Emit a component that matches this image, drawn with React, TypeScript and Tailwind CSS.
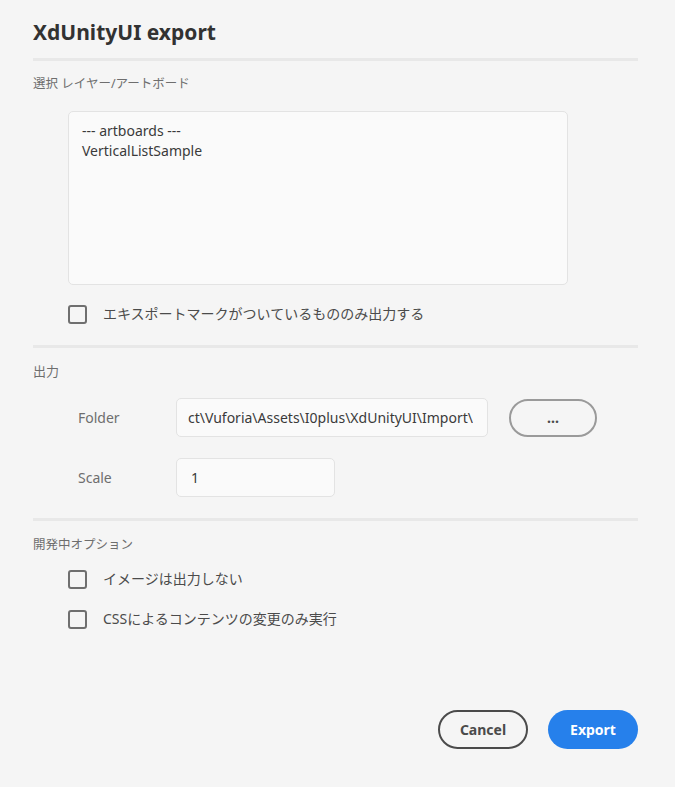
export default function App() {
  const font = { fontFamily: '"Noto Sans", "Noto Sans CJK JP", sans-serif' };
  const Checkbox = ({ label }: { label: string }) => (
    <div className="flex items-center h-[20px]">
      <div className="w-[19px] h-[19px] border-2 border-[#6f6f6f] rounded-[3px] box-border shrink-0" />
      <span className="ml-[16px] text-[14px] text-[#4b4b4b] leading-[20px]">{label}</span>
    </div>
  );
  return (
    <div
      className="w-[675px] h-[787px] bg-[#f5f5f5] pl-[33px] pr-[37px] pt-[17px] pb-[38px] flex flex-col box-border"
      style={font}
    >
      <h1 className="text-[21px] font-bold leading-[30px] text-[#323232] m-0">XdUnityUI export</h1>
      <div className="mt-[11px] h-[3px] bg-[#e8e8e8]" />
      <div className="mt-[13px] text-[12.5px] leading-[20px] text-[#6e6e6e]">選択 レイヤー/アートボード</div>
      <div className="mt-[17px] ml-[35px] w-[500px] h-[174px] bg-[#fafafa] border border-[#e3e3e3] rounded-[5px] box-border px-[13px] py-[9px] text-[14px] leading-[20px] text-[#3a3a3a]">
        <div>--- artboards ---</div>
        <div>VerticalListSample</div>
      </div>
      <div className="mt-[19px] ml-[35px]">
        <Checkbox label="エキスポートマークがついているもののみ出力する" />
      </div>
      <div className="mt-[21px] h-[3px] bg-[#e8e8e8]" />
      <div className="mt-[13px] text-[13px] leading-[20px] text-[#6e6e6e]">出力</div>
      <div className="mt-[17px] flex items-center">
        <div className="ml-[45px] w-[98px] shrink-0 text-[14px] text-[#6e6e6e]">Folder</div>
        <div className="w-[312px] h-[39px] shrink-0 bg-[#fafafa] border border-[#e3e3e3] rounded-[5px] box-border pr-[14px] overflow-hidden">
          <div className="h-full pl-[4px] flex items-center justify-end whitespace-nowrap overflow-hidden text-[14px] text-[#3a3a3a]">
            <span className="shrink-0">ct\Vuforia\Assets\I0plus\XdUnityUI\Import\</span>
          </div>
        </div>
        <button className="ml-[21px] w-[88px] h-[38px] shrink-0 rounded-full border-2 border-[#9a9a9a] box-border text-[14px] font-bold text-[#4b4b4b] flex items-center justify-center leading-none">
          ...
        </button>
      </div>
      <div className="mt-[21px] flex items-center">
        <div className="ml-[45px] w-[98px] shrink-0 text-[14px] text-[#6e6e6e]">Scale</div>
        <div className="w-[159px] h-[39px] bg-[#fafafa] border border-[#e3e3e3] rounded-[5px] box-border px-[14px] flex items-center text-[14px] text-[#3a3a3a]">
          1
        </div>
      </div>
      <div className="mt-[21px] h-[3px] bg-[#e8e8e8]" />
      <div className="mt-[14px] text-[12.5px] leading-[20px] text-[#6e6e6e]">開発中オプション</div>
      <div className="mt-[14px] ml-[35px]">
        <Checkbox label="イメージは出力しない" />
      </div>
      <div className="mt-[20px] ml-[35px]">
        <Checkbox label="CSSによるコンテンツの変更のみ実行" />
      </div>
      <div className="mt-auto flex justify-end gap-[20px]">
        <button className="w-[90px] h-[39px] rounded-full border-2 border-[#4b4b4b] box-border text-[14px] font-bold text-[#4b4b4b]">
          Cancel
        </button>
        <button className="w-[90px] h-[39px] rounded-full bg-[#2680eb] text-[14px] font-bold text-white">
          Export
        </button>
      </div>
    </div>
  );
}
